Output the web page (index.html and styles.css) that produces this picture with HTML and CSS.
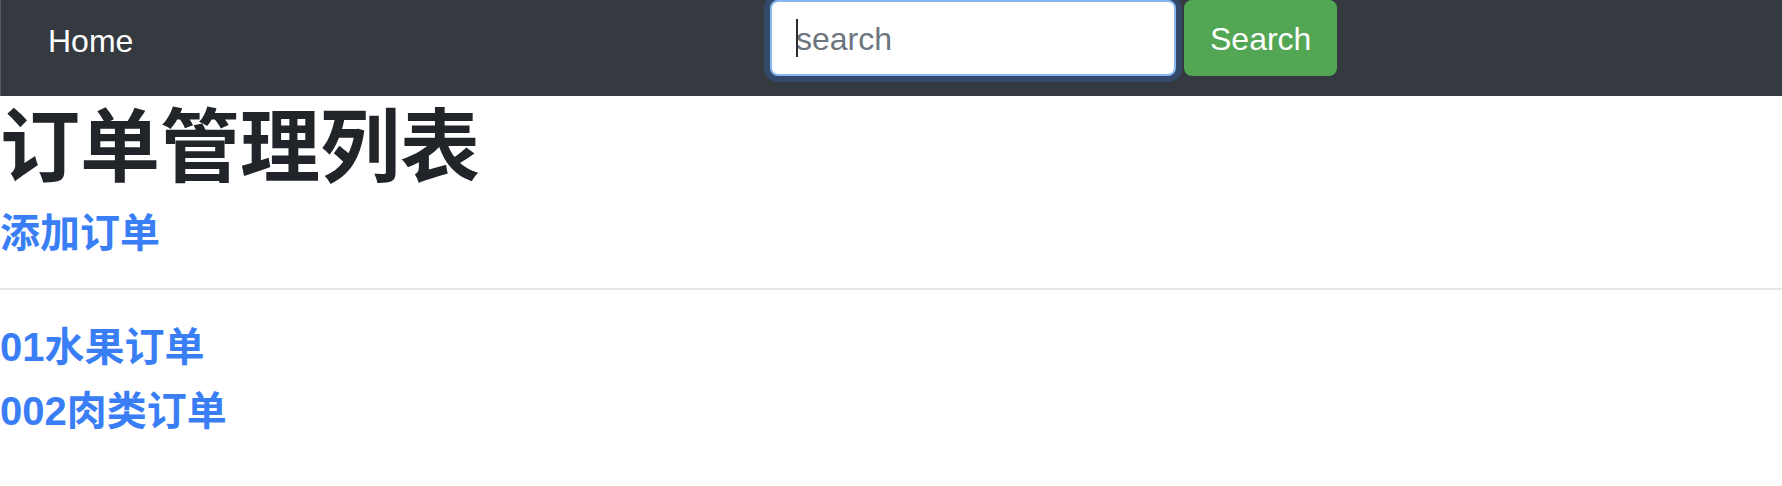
FILE: index.html
```html
<!DOCTYPE html>
<html lang="zh">
<head>
<meta charset="utf-8">
<title>订单管理列表</title>
<link rel="stylesheet" href="styles.css">
</head>
<body>
<nav class="navbar">
  <a class="nav-home" href="#">Home</a>
  <form class="search-form">
    <div class="search-field">
      <input class="search-input" type="text" placeholder="search">
      <span class="caret"></span>
    </div>
    <button class="search-btn" type="button">Search</button>
  </form>
</nav>
<main class="content">
  <h1 class="page-title">订单管理列表</h1>
  <h5 class="link-heading"><a href="#">添加订单</a></h5>
  <hr class="divider">
  <h5 class="link-heading"><a href="#">01水果订单</a></h5>
  <h5 class="link-heading"><a href="#">002肉类订单</a></h5>
</main>
</body>
</html>
```
FILE: styles.css
```css
html, body {
  margin: 0;
  padding: 0;
  background: #ffffff;
}

body {
  font-family: "Liberation Sans", "Noto Sans CJK SC", sans-serif;
  color: #212529;
}

.navbar {
  display: grid;
  grid-template-columns: 770px auto auto;
  align-items: start;
  height: 96px;
  background: #343a40;
  box-shadow: inset 1px 0 0 #54595e;
}

.nav-home {
  padding: 17px 0 0 48px;
  font-size: 32px;
  line-height: 48px;
  color: #ffffff;
  text-decoration: none;
}

.search-form {
  display: flex;
  gap: 8px;
  margin: 0;
}

.search-field {
  position: relative;
}

.search-input {
  display: block;
  box-sizing: border-box;
  width: 406px;
  height: 76px;
  margin: 0;
  padding: 13px 24px 11px;
  border: 2px solid #88b8f4;
  border-radius: 8px;
  background: #ffffff;
  font-family: "Liberation Sans", sans-serif;
  font-size: 32px;
  line-height: 48px;
  color: #495057;
  box-shadow: 0 0 0 6px #33496a;
  outline: none;
}

.search-input::placeholder {
  color: #6c757d;
  opacity: 1;
}

.caret {
  position: absolute;
  left: 26px;
  top: 19px;
  width: 2px;
  height: 38px;
  background: #2a2e33;
}

.search-btn {
  box-sizing: border-box;
  height: 76px;
  margin: 0;
  padding: 13px 24px 11px;
  border: 2px solid #52a654;
  border-radius: 8px;
  background: #52a654;
  color: #ffffff;
  font-family: "Liberation Sans", sans-serif;
  font-size: 32px;
  line-height: 48px;
  cursor: pointer;
}

.content {
  display: block;
}

.page-title {
  margin: 0 0 12px;
  padding-top: 4px;
  font-size: 80px;
  line-height: 96px;
  font-weight: 700;
  color: #212529;
}

.link-heading {
  margin: 0 0 16px;
  padding-top: 3px;
  font-size: 40px;
  line-height: 45px;
  font-weight: 700;
}

.link-heading a {
  color: #3a7ef6;
  text-decoration: none;
}

.divider {
  margin: 32px 0;
  border: 0;
  border-top: 2px solid #e6e6e6;
  height: 0;
}
```
